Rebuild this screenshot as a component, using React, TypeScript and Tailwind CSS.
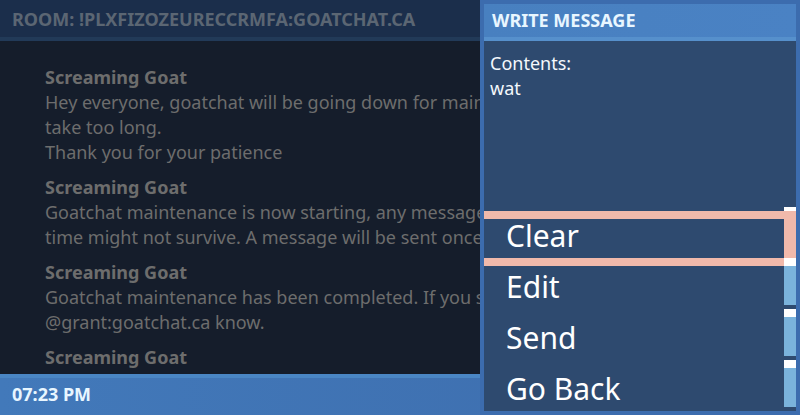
import React from 'react';

// Chat log shown behind the dialog
const messages = [
    {
        id: 1,
        sender: 'Screaming Goat',
        lines: [
            "Hey everyone, goatchat will be going down for maintenance shortly. It shouldn't",
            'take too long.',
            'Thank you for your patience',
        ],
    },
    {
        id: 2,
        sender: 'Screaming Goat',
        lines: [
            'Goatchat maintenance is now starting, any messages sent during this',
            'time might not survive. A message will be sent once it is complete.',
        ],
    },
    {
        id: 3,
        sender: 'Screaming Goat',
        lines: [
            'Goatchat maintenance has been completed. If you see any issues, let',
            '@grant:goatchat.ca know.',
        ],
    },
    {
        id: 4,
        sender: 'Screaming Goat',
        lines: ['Thanks everyone!'],
    },
];

const menuItems = ['Clear', 'Edit', 'Send', 'Go Back'];

const App = () => {
    return (
        <div
            className="relative w-[800px] h-[415px] overflow-hidden bg-[#151d2b]"
            style={{ fontFamily: '"Noto Sans", "Open Sans", sans-serif' }}
        >
            <div className="flex flex-col h-full">
                {/* Room header */}
                <div className="h-[37px] bg-[#1b2e4b] px-3 text-[18px] leading-[37px] pt-px font-bold text-[#5b6673] whitespace-nowrap">
                    ROOM: !PLXFIZOZEURECCRMFA:GOATCHAT.CA
                </div>
                <div className="h-1 bg-[#223a58]" />

                {/* Messages */}
                <div className="flex-1 overflow-hidden pl-[45px] pt-[24px] text-[18px] leading-[25px] text-[#6d6d6d]">
                    {messages.map((m, i) => (
                        <div key={m.id} className={i > 0 ? 'mt-[10px]' : ''}>
                            <p className="font-bold whitespace-nowrap">{m.sender}</p>
                            {m.lines.map((l) => (
                                <p key={l} className="whitespace-nowrap">{l}</p>
                            ))}
                        </div>
                    ))}
                </div>

                {/* Clock bar */}
                <div className="h-1 bg-[#4a86c4]" />
                <div className="h-[37px] bg-gradient-to-r from-[#4279ba] to-[#3d6cac] px-3 text-[18px] leading-[32px] font-bold text-[#e8f6ff]">
                    07:23 PM
                </div>
            </div>

            {/* Write message dialog */}
            <div className="absolute top-0 right-0 w-[320px] h-[415px] bg-[#3c6cae] p-1">
                <div className="flex flex-col h-full bg-[#2e4a6f]">
                    <div className="h-[33px] bg-gradient-to-r from-[#4880c0] to-[#4a82c4] pl-2 text-[18px] leading-[33px] font-bold text-[#e8f6ff]">
                        WRITE MESSAGE
                    </div>
                    <div className="h-1 bg-[#5690cc]" />
                    <div className="flex-1 pl-[6px] pt-[10px] text-[18px] leading-[25px] text-[#f4f8fc]">
                        <p>Contents:</p>
                        <p>wat</p>
                    </div>

                    <div className="relative flex flex-col">
                        {menuItems.map((item) => (
                            <div key={item} className="flex h-[51px]">
                                <div className="flex-1 pl-[22px] pt-[13px] text-[30px] leading-8 text-white">
                                    {item}
                                </div>
                                <div className="w-3 flex flex-col pb-1">
                                    <div className="h-2 bg-white" />
                                    <div className="flex-1 bg-[#7ab3dc]" />
                                </div>
                            </div>
                        ))}

                        {/* focus highlight on first item */}
                        <div className="absolute top-1 left-0 right-0 h-2 bg-[#f0b9ab]" />
                        <div className="absolute top-1 right-0 w-3 h-[47px] bg-[#f0b9ab]" />
                        <div className="absolute top-[51px] left-0 right-3 h-2 bg-[#f0b9ab]" />
                    </div>
                </div>
            </div>
        </div>
    );
};

export default App;
